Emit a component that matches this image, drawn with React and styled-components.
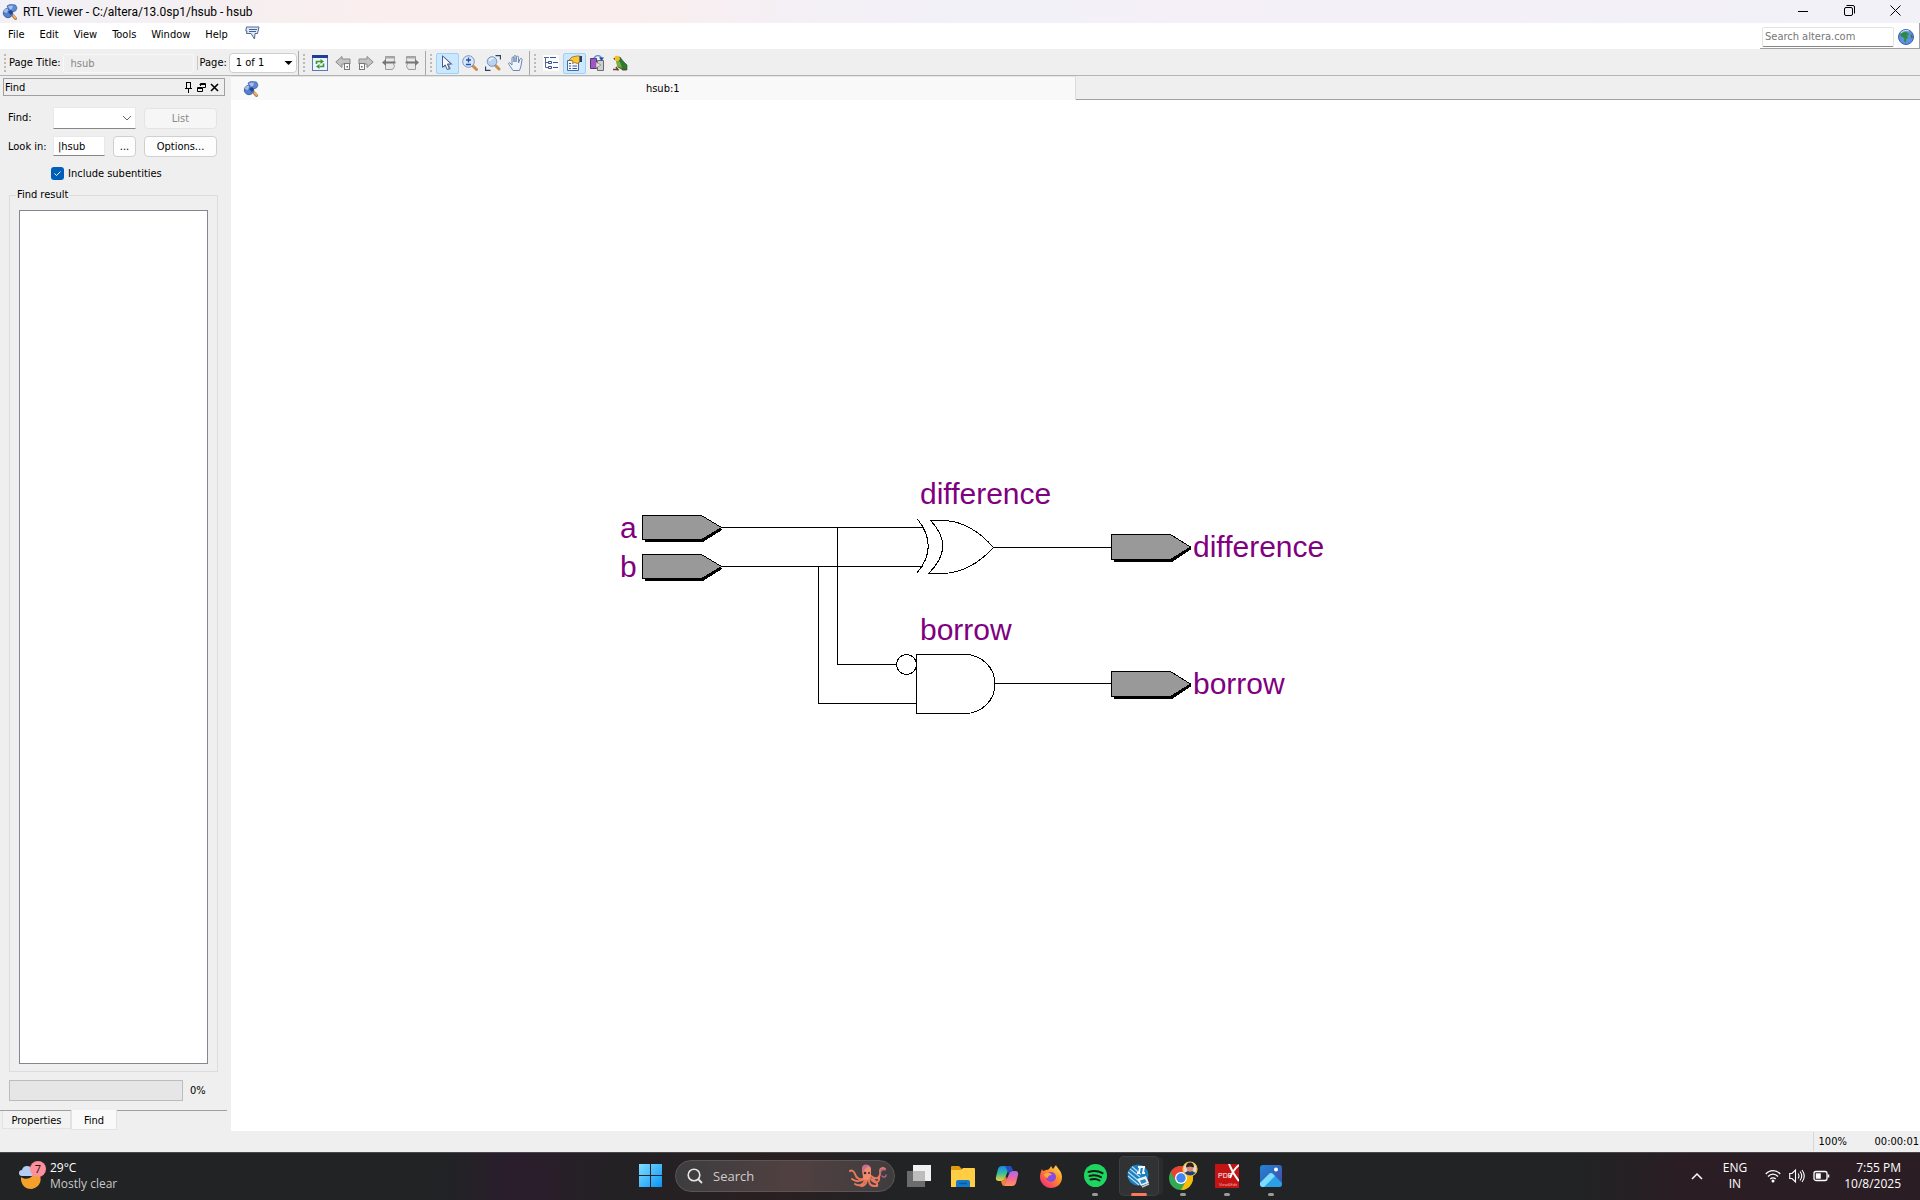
import React from "react";
import styled, { createGlobalStyle, css } from "styled-components";

const UI = `"DejaVu Sans Condensed", "Noto Sans", sans-serif`;
const SEGOE = `"Open Sans", "Noto Sans", sans-serif`;

const GlobalStyle = createGlobalStyle`
  *, *::before, *::after { box-sizing: border-box; }
  body { margin: 0; background: #efefef; color: #000; font: 11px/14px "Noto Sans", sans-serif; }
  button, input, select { font: inherit; color: inherit; margin: 0; }
`;

const Desktop = styled.div`
  display: flex;
  flex-direction: column;
  min-height: 100vh;
  font-family: ${UI};
`;

/* ---------- title bar ---------- */
const TitleBar = styled.header`
  display: flex;
  align-items: center;
  height: 23px;
  padding: 0 2px;
  background: linear-gradient(90deg, #f2f1f6 0, #f5eff1 12%, #fbeeee 20%, #faeeef 33%, #f3f0f6 43%, #f2f1f8 53%, #f5f0f7 61%, #f3f0f7 75%, #f2f1f7 100%);
`;
const Title = styled.h1`
  flex: 1;
  margin: 0 0 0 5px;
  font: 400 12px/16px Roboto, "Open Sans", sans-serif;
`;
const CaptionButton = styled.button`
  display: grid;
  place-items: center;
  width: 46px;
  height: 23px;
  padding: 0 0 3px;
  border: 0;
  background: none;
`;

/* ---------- menu bar ---------- */
const MenuRow = styled.div`
  display: flex;
  justify-content: space-between;
  height: 28px;
  background: #fff;
  border-bottom: 2px solid #efefef;
`;
const Menus = styled.nav`
  display: flex;
  align-items: flex-start;
  gap: 15px;
  padding: 5px 8px;
`;
const MenuButton = styled.button`
  padding: 0;
  border: 0;
  background: none;
  line-height: 14px;
`;
const FeedbackButton = styled(MenuButton)`
  margin: -2px 0 0 2px;
`;
const SiteSearch = styled.form`
  display: flex;
  align-items: center;
  gap: 4px;
  padding: 2px 5px 0 2px;
  border-right: 1px solid #a0a0a0;
  border-bottom: 1px solid #a0a0a0;
`;
const SearchInput = styled.input`
  width: 132px;
  height: 20px;
  padding: 0 2px;
  border: 1px solid #e4e4e4;
  border-bottom-color: #868686;
  border-radius: 2px;
  background: #fff;
  outline: 0;
  &::placeholder { color: #777; opacity: 1; }
`;

/* ---------- toolbar ---------- */
const Toolbar = styled.div`
  display: flex;
  align-items: center;
  height: 25px;
  border-bottom: 1px solid #b4b4b4;
`;
const ToolGroup = styled.div`
  display: flex;
  align-items: center;
  align-self: stretch;
  padding: 0 1px 0 4px;
  border-right: ${(p) => (p.$last ? 0 : 1)}px solid #a8a8a8;
`;
const Grip = styled.span`
  width: 2px;
  height: 18px;
  margin-right: ${(p) => p.$gap || 4}px;
  background: repeating-linear-gradient(#bababa 0 2px, transparent 2px 4px);
`;
const TitleField = styled.input`
  width: 131px;
  height: 19px;
  margin: 0 3px 0 2px;
  padding: 0 7px;
  border: 1px solid #f8f8f8;
  border-radius: 2px;
  background: #efefef;
  color: #868686;
`;
const PageLabel = styled.label`
  padding-left: 2px;
  border-left: 1px solid #c8c8c8;
  margin-right: 2px;
`;
const SelectBox = styled.span`
  position: relative;
  display: flex;
  width: ${(p) => p.$width}px;
  height: ${(p) => p.$height}px;
  svg { position: absolute; right: 4px; top: 50%; transform: translateY(-50%); pointer-events: none; }
`;
const Select = styled.select`
  width: 100%;
  padding: 0 6px;
  appearance: none;
  background: #fff;
  border: 1px solid ${(p) => (p.$flat ? "#e9e9e9" : "#cfcfcf")};
  border-radius: ${(p) => (p.$flat ? 1 : 4)}px;
  ${(p) => p.$flat && css`border-bottom-color: #868686;`}
`;
const ToolButton = styled.button`
  display: grid;
  place-items: center;
  width: 23px;
  height: 21px;
  padding: 0;
  border: 1px solid ${(p) => (p.$on ? "#99d1ff" : "transparent")};
  border-radius: 2px;
  background: ${(p) => (p.$on ? "#cce8ff" : "none")};
`;

/* ---------- work area ---------- */
const Work = styled.main`
  display: flex;
  flex: 1;
`;
const Panel = styled.aside`
  display: flex;
  flex-direction: column;
  width: 231px;
  padding-right: 4px;
`;
const PanelHeader = styled.div`
  display: flex;
  align-items: center;
  height: 18px;
  margin: 2px 2px 0 3px;
  padding: 0 3px 0 1px;
  border: 1px solid #a0a0a0;
`;
const PanelName = styled.h2`
  flex: 1;
  margin: 0;
  padding-top: 2px;
  font: inherit;
`;
const PanelButton = styled.button`
  display: grid;
  place-items: center;
  width: 13px;
  height: 14px;
  padding: 0;
  border: 0;
  background: none;
`;
const FindGrid = styled.div`
  display: grid;
  grid-template-columns: 45px 91px 73px;
  row-gap: 7px;
  align-items: center;
  padding: 11px 8px 0;
`;
const LookFields = styled.div`
  display: flex;
  gap: 8px;
`;
const LookInput = styled.input`
  width: 52px;
  height: 20px;
  padding: 0 4px;
  border: 1px solid #e9e9e9;
  border-bottom-color: #868686;
  background: #fff;
  outline: 0;
`;
const PushButton = styled.button`
  width: ${(p) => p.$width || 73}px;
  height: 21px;
  padding: 1px 0 0;
  border: 1px solid #d0d0d0;
  border-radius: 4px;
  background: #fdfdfd;
  &:disabled { color: #8a8a8a; background: #f6f6f6; border-color: #e4e4e4; }
`;
const CheckRow = styled.label`
  display: flex;
  align-items: center;
  gap: 4px;
  height: 13px;
  margin: 10px 0 8px 51px;
`;
const CheckWrap = styled.span`
  position: relative;
  display: flex;
  svg { position: absolute; inset: 0; pointer-events: none; }
`;
const Check = styled.input`
  appearance: none;
  width: 13px;
  height: 13px;
  border-radius: 3px;
  background: #005fb8;
`;
const Results = styled.fieldset`
  display: flex;
  flex: 1;
  margin: 0 9px 8px;
  padding: 8px 9px 7px;
  border: 1px solid #dcdcdc;
  min-width: 0;
`;
const Legend = styled.legend`
  padding: 0 1px;
  margin-left: -3px;
  line-height: 14px;
`;
const ResultList = styled.div`
  flex: 1;
  background: #fff;
  border: 1px solid #828790;
`;
const ProgressRow = styled.label`
  display: flex;
  align-items: center;
  gap: 7px;
  padding: 0 9px 9px;
`;
const Progress = styled.progress`
  appearance: none;
  width: 174px;
  height: 21px;
  border: 1px solid #bcbcbc;
  background: #e6e6e6;
  &::-webkit-progress-bar { background: #e6e6e6; }
`;
const PanelTabs = styled.div`
  display: flex;
  align-items: flex-start;
  height: 21px;
  padding-left: 2px;
  border-top: 1px solid #a0a0a0;
`;
const PanelTab = styled.button`
  width: ${(p) => p.$width}px;
  height: ${(p) => (p.$on ? 20 : 18)}px;
  margin-top: ${(p) => (p.$on ? -1 : 0)}px;
  padding: 2px 0 0;
  border: 1px solid #e2e2e2;
  border-top: 0;
  background: ${(p) => (p.$on ? "#f9f9f9" : "#f2f2f2")};
`;
const Document = styled.section`
  display: flex;
  flex: 1;
  flex-direction: column;
  min-width: 0;
`;
const DocTabs = styled.div`
  display: flex;
  height: 24px;
`;
const DocTab = styled.button`
  display: flex;
  width: 50%;
  align-items: center;
  padding: 0 8px 0 12px;
  border: 0;
  border-top: 1px solid #e4e4e4;
  border-right: 1px solid #dcdcdc;
  background: #f9f9f9;
  span { flex: 1; }
`;
const TabFiller = styled.div`
  flex: 1;
  border-bottom: 1px solid #a0a0a0;
`;
const Canvas = styled.div`
  display: flex;
  flex: 1;
  background: #fff;
`;
const Schematic = styled.svg`
  flex: 1;
  min-width: 0;
  shape-rendering: crispEdges;
  text { font: 30px "Liberation Sans", Arial, sans-serif; fill: #800080; }
`;
const StatusBar = styled.footer`
  display: flex;
  justify-content: flex-end;
  align-items: center;
  height: 21px;
`;
const Zoom = styled.span`
  width: 62px;
  padding: 3px 5px 2px;
  border-left: 1px solid #d7d7d7;
`;
const Elapsed = styled.span`
  padding: 1px 1px 0 0;
`;

/* ---------- taskbar ---------- */
const Taskbar = styled.footer`
  display: grid;
  grid-template-columns: 1fr auto 1fr;
  height: 48px;
  border-top: 1px solid #48484a;
  background: linear-gradient(90deg, #212325 0, #212325 23%, #2b1d2c 27%, #232124 32%, #2a1f21 41%, #212325 47%, #212325 82%, #2b1d24 88%, #2b1d24 100%);
  color: #fff;
  font: 12px/16px ${SEGOE};
`;
const Weather = styled.button`
  display: flex;
  align-items: center;
  gap: 4px;
  justify-self: start;
  padding: 0 0 1px 18px;
  border: 0;
  background: none;
  text-align: left;
  svg { margin-bottom: 2px; }
`;
const WeatherText = styled.span`
  display: flex;
  flex-direction: column;
  small { font-size: 12px; color: #c8c8c8; }
`;
const Apps = styled.div`
  display: flex;
  align-items: center;
  padding: 0 0 2px 1px;
`;
const AppButton = styled.button`
  position: relative;
  display: grid;
  place-items: center;
  width: 40px;
  height: 40px;
  margin: 0 2px;
  padding: 0;
  border: 0;
  border-radius: 5px;
  background: ${(p) => (p.$active ? "#303234" : "none")};
  box-shadow: ${(p) => (p.$active ? "inset 0 0 0 1px #3c3e40, 5px 0 0 -1px #292b2d" : "none")};
  &::after {
    content: "";
    display: ${(p) => (p.$running ? "block" : "none")};
    position: absolute;
    bottom: 0;
    left: 50%;
    width: ${(p) => (p.$active ? 16 : 6)}px;
    height: 3px;
    border-radius: 2px;
    transform: translateX(-50%);
    background: ${(p) => (p.$active ? "#f8795c" : "#9a9a9a")};
  }
`;
const TaskSearch = styled.label`
  display: flex;
  align-items: center;
  gap: 10px;
  width: 220px;
  height: 32px;
  margin: 0 2px 0 3px;
  padding: 0 7px 0 11px;
  border: 1px solid #5a5556;
  border-radius: 16px;
  background: linear-gradient(90deg, #3d3d3f, #514041 55%, #403d3f);
`;
const TaskInput = styled.input`
  flex: 1;
  min-width: 0;
  padding: 0;
  border: 0;
  outline: 0;
  background: none;
  font-size: 13px;
  &::placeholder { color: #d0cccc; opacity: 1; }
`;
const Tray = styled.div`
  display: flex;
  align-items: center;
  justify-self: end;
  padding: 0 19px 1px 0;
`;
const TrayButton = styled.button`
  display: flex;
  align-items: center;
  justify-content: center;
  gap: ${(p) => p.$gap || 0}px;
  padding: 0;
  margin-left: ${(p) => p.$lead || 0}px;
  border: 0;
  background: none;
  line-height: 16px;
  text-align: ${(p) => p.$align || "center"};
`;

/* ---------- icons ---------- */
const Svg = ({ s = 16, w, h, vb, children }) => (
  <svg width={w || s} height={h || s} viewBox={vb || `0 0 ${w || s} ${h || s}`} fill="none" aria-hidden="true">{children}</svg>
);
const ViewerIcon = () => (
  <Svg>
    <path d="M10 10.500l3.500 4" stroke="#b87a40" strokeWidth="3" strokeLinecap="round" />
    <path d="M10.500 10.500l3 3.500" stroke="#efb878" strokeWidth="1.500" strokeLinecap="round" />
    <circle cx="6" cy="9" r="4.700" fill="#5580ca" stroke="#3c62a8" />
    <path d="M1.500 8c1-3 3.500-4 5-3.500L5 9z" fill="#a3bee8" />
    <path d="M5 2l3-1.500L13.500 1 15 4l-1.500 3-3.500 1-3-2z" fill="#5f88d2" stroke="#3d63ac" strokeWidth=".8" />
    <path d="M6 2.500l3-1 2 .5-1 3-2 .5z" fill="#a4c1ec" />
    <path d="M6 8l3-2 2 2-2 3z" fill="#1f4596" />
  </Svg>
);
const ChatIcon = () => (
  <Svg w={15} h={14}>
    <path d="M3 1h11l-1.500 6.500H10L9.500 13 6 7.500H1.500L2 5H.8L1.500 1z" fill="#dfe9f8" stroke="#52688e" strokeLinejoin="round" />
    <path d="M4 3.500h8M4 5.500h7" stroke="#42629b" />
  </Svg>
);
const GlobeIcon = () => (
  <Svg>
    <circle cx="8" cy="8" r="7.500" fill="#5d91dd" stroke="#3a60ae" />
    <path d="M2 6c1-2 3-3 6-3l3 2-2 2 1 2-2 1v4L6 12 6.500 9 3 7.500z" fill="#2f8b3c" />
    <path d="M12.500 5l2 1.500v3L13 9z" fill="#2f7f3c" />
    <path d="M3 4c2-2.500 5-3 8-2" stroke="#c4dcf8" strokeWidth="1.200" />
  </Svg>
);
const RefreshIcon = () => (
  <Svg>
    <rect x=".5" y=".5" width="15" height="15" fill="#eef4fb" stroke="#5b77b8" />
    <path d="M0 0h16v3H0z" fill="#1c3f9b" />
    <path d="M4.500 9V6.500H9" stroke="#3a9a37" strokeWidth="1.600" />
    <path d="M8.500 4l3.500 2.500L8.500 9z" fill="#3a9a37" />
    <path d="M11.500 8.500v3H7.500" stroke="#3a9a37" strokeWidth="1.600" />
    <path d="M7.500 9L4 11.500 7.500 14z" fill="#3a9a37" />
  </Svg>
);
const PageArrow = ({ flip }) => (
  <Svg>
    <g transform={flip ? "matrix(-1 0 0 1 16 0)" : undefined}>
      <path d="M.8 7L7 1.500V4h8v5H7v3.500z" fill="#c4c4c4" stroke="#8b8b8b" />
      <rect x="9.500" y="8.500" width="5" height="6" fill="#fafafa" stroke="#777" />
      <path d="M11.500 11h1.500v1.500h-1.500z" fill="#666" />
    </g>
  </Svg>
);
const SheetArrow = ({ flip }) => (
  <Svg>
    <g transform={flip ? "matrix(-1 0 0 1 16 0)" : undefined}>
      <path d="M4.500 1.500h9v3l-1 4 1 3-2 3h-7z" fill="#e9e9e9" stroke="#9a9a9a" />
      <path d="M4.500 1.500h9v2h-9z" fill="#a8a8a8" />
      <path d="M1 7.500L5 4v2.500h9.500v2H5V11z" fill="#777" />
    </g>
  </Svg>
);
const PointerIcon = () => (
  <Svg>
    <path d="M4.500 1v12l3-2.500 2 4.500 2.500-1-2-4.500h4z" fill="#3e4a63" opacity=".5" />
    <path d="M3.500.8v11.500l2.700-2.400 2 4.600 2.200-1-2-4.500h3.700z" fill="#f6f9ff" stroke="#4b5f86" />
  </Svg>
);
const ZoomIcon = () => (
  <Svg>
    <path d="M10.500 10.500l4 4" stroke="#c98d4c" strokeWidth="3" strokeLinecap="round" />
    <circle cx="6.500" cy="6.500" r="5.800" fill="#d8e8fa" stroke="#7394c7" />
    <path d="M6.500 2.500v5M4 5h5M4 9.500h5" stroke="#234fa5" strokeWidth="1.300" />
  </Svg>
);
const FitIcon = () => (
  <Svg>
    <path d="M10.500.5h5v4M.5 11.500v4h5" stroke="#2b4268" strokeWidth="1.300" />
    <path d="M10.500 10.500l3.500 3.500" stroke="#c98d4c" strokeWidth="3" strokeLinecap="round" />
    <circle cx="7" cy="6.500" r="4.800" fill="#b9d4ef" stroke="#7394c7" />
    <path d="M4.500 6c.5-2 2-3 4-2.500" stroke="#f2f8ff" strokeWidth="1.400" />
  </Svg>
);
const HandIcon = () => (
  <Svg>
    <path d="M5 15.500L1 9.500Q0 7.500 1.500 7.500L4 10V3q0-1 1-1t1 1v4-5.500q0-1 1-1t1 1V7l.5-5q.2-1 1.200-.8t.8 1.200V8l1.500-4q.5-1 1.500-.5t.5 1.500L13 11l-1.500 4.500z" fill="#eef3fc" stroke="#6e87b2" />
  </Svg>
);
const TreeIcon = () => (
  <Svg>
    <path fill="#fdfdfd" d="M0 0h16v16H0z" />
    <path d="M2.500 3v9.500H6M2.500 7.500H6M1 2.500h5" stroke="#56698b" />
    <path d="M5.500 6.500h3v2h-3zM5.500 11.500h3v2h-3z" stroke="#33507f" />
    <path d="M7 2.500h6M10 7.500h5M10 12.500h5" stroke="#2a53b0" />
  </Svg>
);
const PropsIcon = () => (
  <Svg>
    <path d="M1.500 5.500h11v10h-11z" fill="#f2f6fd" stroke="#50679b" />
    <path d="M3 8.500h2M3 11h2M3 13.500h2M6.500 11H11M6.500 13.500H11" stroke="#315cab" />
    <path d="M3 5l3-3 5-1h3v6L11 8.500 9 7.500 6.500 8.500 7 6z" fill="#f8c73c" stroke="#9c6c14" strokeWidth=".8" />
    <path d="M13.500 1H16v6h-2.500z" fill="#2d3c66" />
  </Svg>
);
const CopyIcon = () => (
  <Svg>
    <path d="M1.500 3.500h6v10h-6z" fill="#a454c9" stroke="#4a3d6e" />
    <path d="M8.500 5.500h6v10h-6z" fill="#d0d0d0" stroke="#6c6c6c" />
    <path d="M7 7l5 3-5 3z" fill="#e2e2e2" stroke="#777" strokeWidth=".6" />
    <path d="M5 3C7-.2 11-.2 12.500 3" stroke="#5f92e2" strokeWidth="1.500" />
    <path d="M10 2.500h5L12.500 6z" fill="#2747a1" />
  </Svg>
);
const ParrotIcon = () => (
  <Svg>
    <path d="M4 3l4-1 3 4 4 4v5h-4L6 12z" fill="#2f7a32" stroke="#234f20" strokeWidth=".6" />
    <path d="M4 5l4 2 2 6-5-2z" fill="#77b53c" />
    <circle cx="5" cy="3.500" r="2.800" fill="#f3bd2c" />
    <path d="M1 3.500l2-.5v2z" fill="#444" />
    <path d="M1 14.500h5M4 12l2.500 3.500M10 14.500h4" stroke="#7a3f32" strokeWidth="1.600" />
  </Svg>
);
const Caret = () => <Svg w={9} h={5}><path d="M.5.5h8L4.500 4.500z" fill="#000" /></Svg>;
const Chevron = () => <Svg w={10} h={6}><path d="M1 1l4 4 4-4" stroke="#666" /></Svg>;

const PortShape = ({ x, y, h }) => (
  <g>
    <path d={`M${x + 2} ${y + h + 1}H${x + 60}L${x + 79} ${y + h / 2 + 1}`} stroke="#000" strokeWidth="3" fill="none" />
    <path d={`M${x} ${y}h59l20 ${h / 2}l-20 ${h / 2}h-59z`} fill="#999" stroke="#000" />
  </g>
);

const menus = ["File", "Edit", "View", "Tools", "Window", "Help"];

const WinLogo = () => (
  <Svg s={23}>
    <defs><linearGradient id="win" x2="1" y2="1"><stop stopColor="#7fe0ff" /><stop offset="1" stopColor="#0a93f5" /></linearGradient></defs>
    <path d="M0 0h11v11H0zM12 0h11v11H12zM0 12h11v11H0zM12 12h11v11H12z" fill="url(#win)" />
  </Svg>
);
const OctopusIcon = () => (
  <Svg w={38} h={24}>
    <g stroke="#e8795c" strokeWidth="2" strokeLinecap="round">
      <path d="M16 13C12 18 7 14 6 10c-1-3-3-4-5-3M16 14c-4 4-9 4-13 1M16 16c-2 6-7 6-10 4M18 16c-1 5-3 6-6 6M20 16c0 6 4 6 7 6M22 15c5 6 9 3 8-2M22 12c6 5 10 1 9-5 0-3 3-4 5-2M24 15c3 3 5 5 4 7" />
    </g>
    <path d="M31 9c1-3 3-4 5-3M33 12c2 2 4 1 4-1" stroke="#a8678f" strokeWidth="1.500" strokeLinecap="round" />
    <path d="M13 5c0-6 10-5 9 1-.5 3 1 6-1 9-3 2-7 1-7-2 0-2-1-4-1-8z" fill="#f08c6c" />
    <path d="M13 5c0-6 7-5 8-2-4-1-5 3-7 5z" fill="#c76d94" />
    <circle cx="16" cy="9" r="1.300" fill="#4a2340" /><circle cx="20" cy="9" r="1" fill="#4a2340" />
  </Svg>
);
const TaskViewIcon = () => (
  <Svg w={24} h={22}>
    <path d="M6 0h18v16H6z" fill="#f1f1f1" /><path d="M0 6h18v16H0z" fill="#6c6c6c" /><path d="M6 6h12v10H6z" fill="#bdbdbd" />
  </Svg>
);
const FolderIcon = () => (
  <Svg w={24} h={22}>
    <path d="M0 2q0-1 1-1h7l3 3h11v6H0z" fill="#dc9a0c" />
    <path d="M0 5h10l2-2h11q1 0 1 1v18H0z" fill="#ffce45" />
    <path d="M5 22v-5q0-2 2-2h10q2 0 2 2v5z" fill="#1379cc" /><path d="M8 18.500h8" stroke="#0a589f" strokeWidth="1.500" />
  </Svg>
);
const CopilotIcon = () => (
  <Svg w={24} h={22}>
    <defs>
      <linearGradient id="cpa" x2="0" y2="1"><stop stopColor="#1786ec" /><stop offset=".5" stopColor="#36bd9a" /><stop offset="1" stopColor="#f6d02f" /></linearGradient>
      <linearGradient id="cpb" x2="0" y2="1"><stop stopColor="#a86bf0" /><stop offset=".5" stopColor="#f0679b" /><stop offset="1" stopColor="#ff9659" /></linearGradient>
    </defs>
    <path d="M7 1h8l-5 12q-1 3-4 3H4q-4 0-3-4L3 4q1-3 4-3z" fill="url(#cpa)" />
    <path d="M17 21H9l5-12q1-3 4-3h2q4 0 3 4l-2 8q-1 3-4 3z" fill="url(#cpb)" />
    <path d="M10 1h5q2 0 3 5-3 0-4 3l-2-4z" fill="#2450bd" />
    <path d="M6 16q3 0 4-3l1-2 1 4-3 6q-2 0-3-5z" fill="#f2803f" />
  </Svg>
);
const FirefoxIcon = () => (
  <Svg s={24}>
    <defs><linearGradient id="ff" x1="1" x2=".2" y2="1"><stop stopColor="#ffe94a" /><stop offset=".5" stopColor="#ff8a2a" /><stop offset="1" stopColor="#f22b78" /></linearGradient></defs>
    <path d="M3 5l1 2 3-1c2 0 3-1 4-2l1-2 2 3 3-4c1 3 6 6 6 12 0 7-5 11-11 11S1 19 1 13c0-3 1-6 2-8z" fill="url(#ff)" />
    <circle cx="12" cy="13" r="5" fill="#8a4be0" />
    <path d="M5 11c3-4 7-2 8 0-3 0-4 1-4 3-2 0-3-1-4-3z" fill="#ffa436" />
  </Svg>
);
const SpotifyIcon = () => (
  <Svg s={23}>
    <circle cx="11.500" cy="11.500" r="11.500" fill="#1ed760" />
    <path d="M4.500 8c5-1.500 10-1 14 1.200M5.500 12c4-1.200 8-.8 11.500 1.200M6.500 15.500c3-.8 6.500-.6 9 1" stroke="#111c15" strokeWidth="2" strokeLinecap="round" />
  </Svg>
);
const QuartusIcon = () => (
  <Svg s={24}>
    <circle cx="11" cy="11" r="10.500" fill="#1b7fc0" />
    <path d="M3 5l10 8M1 8l12 10M5 2.500l9 8M1 12l11 9" stroke="#b8dcf1" strokeWidth="1.200" />
    <path d="M11 3h7M10 9h3M15 9h3M13 3l-1 6M17 3l-1 6" stroke="#f3f9ff" strokeWidth="1.800" />
    <path d="M10 15l9-3 3 7-8 3z" fill="#e5f3fb" />
    <path d="M13 16.500l5-1.500 1.500 3-5 2z" fill="#2b86c4" />
    <path d="M15 23l7-3" stroke="#bccbd6" strokeWidth="1.500" />
  </Svg>
);
const ChromeIcon = () => (
  <Svg s={30}>
    <g transform="translate(1 5)">
      <circle cx="12" cy="12" r="12" fill="#35a852" />
      <path d="M1.600 6A12 12 0 0 1 22.400 6H12L7 15z" fill="#e94235" />
      <path d="M22.400 6A12 12 0 0 1 12 24l5.200-9L12 6z" fill="#fbbc05" />
      <circle cx="12" cy="12" r="6" fill="#fff" /><circle cx="12" cy="12" r="4.700" fill="#4285f4" />
    </g>
    <circle cx="22" cy="8" r="7" fill="#e8d5cf" stroke="#f6c52f" strokeWidth="1.200" />
    <path d="M16.500 12q5.500-5 11 0-5 5-11 0z" fill="#23417a" /><circle cx="22" cy="7.500" r="3.200" fill="#d98e70" /><path d="M18 6.500q0-5 4-5t4 5l-4-1z" fill="#2b2222" />
  </Svg>
);
const PdfIcon = () => (
  <Svg s={24}>
    <path d="M0 0h24v24H0z" fill="#c41313" />
    <path d="M14 0q4 10 10 17M24 1q-6 5-9 13" stroke="#fff" strokeWidth="2" />
    <text x="3" y="14" fontSize="7" fontFamily="Liberation Sans, sans-serif" fill="#fff">PDF</text>
    <text x="4" y="22" fontSize="4" fontFamily="Liberation Sans, sans-serif" fill="#f0b0b0">View&amp;Edit</text>
  </Svg>
);
const PhotosIcon = () => (
  <Svg s={22}>
    <defs><linearGradient id="ph" x2="1" y2="1"><stop stopColor="#2185d8" /><stop offset="1" stopColor="#4549a5" /></linearGradient></defs>
    <rect width="22" height="22" rx="3" fill="url(#ph)" />
    <path d="M0 18L9 9q2-2 4 0l9 9v1q0 3-3 3H3q-3 0-3-3z" fill="#2aa0e6" />
    <path d="M0 18L9 9q2-2 4 0l2 2L4 22H3q-3 0-3-3z" fill="#7ddcfb" /><circle cx="16" cy="4.500" r="2" fill="#fff" />
  </Svg>
);
const WeatherIcon = () => (
  <Svg w={28} h={28}>
    <path d="M3 16c5 4 13 1 14-7 9 5 7 18-4 19-5 0-9-3-10-9z" fill="#f5a02b" />
    <path d="M4 15q-3 0-3-3t3-3q1-4 5-4t5 4q3 1 3 3t-3 3z" fill="#b6cdf3" />
    <circle cx="20" cy="8" r="8" fill="#ff8f9a" />
    <text x="20" y="12" textAnchor="middle" fontSize="11" fontFamily="Noto Sans, sans-serif" fill="#1b1b1b">7</text>
  </Svg>
);

const apps = [
  ["Task view", TaskViewIcon], ["File Explorer", FolderIcon], ["Copilot", CopilotIcon], ["Firefox", FirefoxIcon],
  ["Spotify", SpotifyIcon, true], ["Quartus", QuartusIcon, true, true], ["Chrome", ChromeIcon, true],
  ["PDF", PdfIcon, true], ["Photos", PhotosIcon, true],
];

export default function App() {
  return (
    <>
      <GlobalStyle />
      <Desktop>
        <TitleBar>
          <ViewerIcon />
          <Title>RTL Viewer - C:/altera/13.0sp1/hsub - hsub</Title>
          <CaptionButton aria-label="Minimize"><Svg s={11}><path d="M0 6.500h10" stroke="#000" /></Svg></CaptionButton>
          <CaptionButton aria-label="Restore"><Svg s={11}><rect x=".5" y="2.500" width="8" height="8" rx="1.500" stroke="#000" /><path d="M2.500.5H9q1.500 0 1.500 1.500v6.500" stroke="#000" /></Svg></CaptionButton>
          <CaptionButton aria-label="Close"><Svg s={11}><path d="M.5.5l10 10M10.500.5l-10 10" stroke="#000" /></Svg></CaptionButton>
        </TitleBar>

        <MenuRow>
          <Menus>
            {menus.map((m) => <MenuButton key={m}>{m}</MenuButton>)}
            <FeedbackButton aria-label="Feedback"><ChatIcon /></FeedbackButton>
          </Menus>
          <SiteSearch>
            <SearchInput aria-label="Search altera.com" placeholder="Search altera.com" />
            <GlobeIcon />
          </SiteSearch>
        </MenuRow>

        <Toolbar>
          <ToolGroup>
            <Grip $gap={3} />
            <label htmlFor="page-title">Page Title:</label>
            <TitleField id="page-title" defaultValue="hsub" readOnly />
            <PageLabel htmlFor="page">Page:</PageLabel>
            <SelectBox $width={68} $height={20}>
              <Select id="page"><option>1 of 1</option></Select>
              <Caret />
            </SelectBox>
          </ToolGroup>
          <ToolGroup>
            <Grip />
            <ToolButton aria-label="Refresh"><RefreshIcon /></ToolButton>
            <ToolButton aria-label="Previous page"><PageArrow /></ToolButton>
            <ToolButton aria-label="Next page"><PageArrow flip /></ToolButton>
            <ToolButton aria-label="Back"><SheetArrow /></ToolButton>
            <ToolButton aria-label="Forward"><SheetArrow flip /></ToolButton>
          </ToolGroup>
          <ToolGroup>
            <Grip />
            <ToolButton $on aria-label="Select"><PointerIcon /></ToolButton>
            <ToolButton aria-label="Zoom"><ZoomIcon /></ToolButton>
            <ToolButton aria-label="Fit"><FitIcon /></ToolButton>
            <ToolButton aria-label="Pan"><HandIcon /></ToolButton>
          </ToolGroup>
          <ToolGroup $last>
            <Grip />
            <ToolButton aria-label="Netlist"><TreeIcon /></ToolButton>
            <ToolButton $on aria-label="Properties"><PropsIcon /></ToolButton>
            <ToolButton aria-label="Partition"><CopyIcon /></ToolButton>
            <ToolButton aria-label="Bird's eye"><ParrotIcon /></ToolButton>
          </ToolGroup>
        </Toolbar>

        <Work>
          <Panel>
            <PanelHeader>
              <PanelName>Find</PanelName>
              <PanelButton aria-label="Pin"><Svg w={9} h={11}><path d="M2.500 0v6M6.500 0v6M2 .5h5M1 6.500h7M4.500 7v4" stroke="#000" /></Svg></PanelButton>
              <PanelButton aria-label="Float"><Svg s={9}><path d="M3.500 3V.5h5v4H6M2.500 1.500h6M.5 4.500h5v4h-5zM0 5.500h6" stroke="#000" /></Svg></PanelButton>
              <PanelButton aria-label="Close panel"><Svg s={9}><path d="M1 1l7 7M8 1L1 8" stroke="#000" strokeWidth="1.600" /></Svg></PanelButton>
            </PanelHeader>
            <FindGrid>
              <label htmlFor="find">Find:</label>
              <SelectBox $width={83} $height={22}>
                <Select id="find" $flat><option></option></Select>
                <Chevron />
              </SelectBox>
              <PushButton disabled>List</PushButton>
              <label htmlFor="look">Look in:</label>
              <LookFields>
                <LookInput id="look" defaultValue="|hsub" />
                <PushButton $width={23}>...</PushButton>
              </LookFields>
              <PushButton>Options...</PushButton>
            </FindGrid>
            <CheckRow>
              <CheckWrap>
                <Check type="checkbox" defaultChecked />
                <Svg s={13}><path d="M3.500 6.500l2 2 4-4" stroke="#fff" /></Svg>
              </CheckWrap>
              Include subentities
            </CheckRow>
            <Results>
              <Legend>Find result</Legend>
              <ResultList />
            </Results>
            <ProgressRow><Progress value={0} max={100} />0%</ProgressRow>
            <PanelTabs>
              <PanelTab $width={69}>Properties</PanelTab>
              <PanelTab $width={46} $on>Find</PanelTab>
            </PanelTabs>
          </Panel>

          <Document>
            <DocTabs>
              <DocTab><ViewerIcon /><span>hsub:1</span></DocTab>
              <TabFiller />
            </DocTabs>
            <Canvas>
              <Schematic role="img" aria-label="Half subtractor schematic">
                <g transform="translate(379 370)" fill="none" stroke="#000">
                  <path d="M111 57.500H313M111 96.500H313M227.500 57.500V194.500H286M208.500 96.500V233.500H306M383 77.500H501M385 213.500H501" />
                  <PortShape x={32.5} y={45.5} h={24} />
                  <PortShape x={32.5} y={84.5} h={24} />
                  <PortShape x={501.5} y={64.5} h={25} />
                  <PortShape x={501.5} y={201.5} h={25} />
                  <path d="M307.500 49Q329.500 77 306.500 103.500" />
                  <path d="M320.500 50.500H335Q361 52 383.500 77.500Q360 103 332 103.500H318.500Q346 77 320.500 50.500z" />
                  <circle cx="296.500" cy="194.500" r="10" />
                  <path d="M306.500 184.500H355A30 29.500 0 0 1 355 243.500H306.500z" />
                  <g stroke="none">
                    <text x="10" y="68">a</text>
                    <text x="10" y="107">b</text>
                    <text x="310" y="34">difference</text>
                    <text x="310" y="170">borrow</text>
                    <text x="583" y="87">difference</text>
                    <text x="583" y="224">borrow</text>
                  </g>
                </g>
              </Schematic>
            </Canvas>
          </Document>
        </Work>

        <StatusBar>
          <Zoom>100%</Zoom>
          <Elapsed>00:00:01</Elapsed>
        </StatusBar>

        <Taskbar>
          <Weather>
            <WeatherIcon />
            <WeatherText>29°C<small>Mostly clear</small></WeatherText>
          </Weather>
          <Apps>
            <AppButton aria-label="Start"><WinLogo /></AppButton>
            <TaskSearch>
              <Svg><circle cx="7" cy="7" r="5.800" stroke="#e6e6e6" strokeWidth="1.600" /><path d="M11 11l4 4" stroke="#e6e6e6" strokeWidth="1.800" /></Svg>
              <TaskInput placeholder="Search" aria-label="Search" />
              <OctopusIcon />
            </TaskSearch>
            {apps.map(([name, Icon, running, active]) => (
              <AppButton key={name} aria-label={name} $running={running} $active={active}><Icon /></AppButton>
            ))}
          </Apps>
          <Tray>
            <TrayButton aria-label="Hidden icons"><Svg w={12} h={8}><path d="M1 7l5-5 5 5" stroke="#fff" strokeWidth="1.500" /></Svg></TrayButton>
            <TrayButton $lead={20}>ENG<br />IN</TrayButton>
            <TrayButton $lead={18} $gap={8} aria-label="Network, volume, battery">
              <Svg><path d="M.8 6c4-4.600 10.400-4.600 14.400 0M3 8.500c3-3.200 7-3.200 10 0M5.300 11c1.600-1.600 3.800-1.600 5.400 0" stroke="#fff" strokeWidth="1.300" /><circle cx="8" cy="13" r="1.500" fill="#fff" /></Svg>
              <Svg><path d="M.7 5.500H3L6.500 2v12L3 10.500H.7z" stroke="#fff" strokeWidth="1.100" /><path d="M9 5.500q2 2.500 0 5M11 3.500q3.500 4.500 0 9M13 2q4.500 6 0 12" stroke="#fff" strokeWidth="1.100" /></Svg>
              <Svg w={17} h={16}><rect x="1" y="3.500" width="13" height="9" rx="2" stroke="#fff" strokeWidth="1.300" /><rect x="2.800" y="5.300" width="5" height="5.400" fill="#fff" /><path d="M15.500 6.500v3" stroke="#fff" strokeWidth="1.500" /></Svg>
            </TrayButton>
            <TrayButton $lead={14} $align="right">7:55 PM<br />10/8/2025</TrayButton>
          </Tray>
        </Taskbar>
      </Desktop>
    </>
  );
}
